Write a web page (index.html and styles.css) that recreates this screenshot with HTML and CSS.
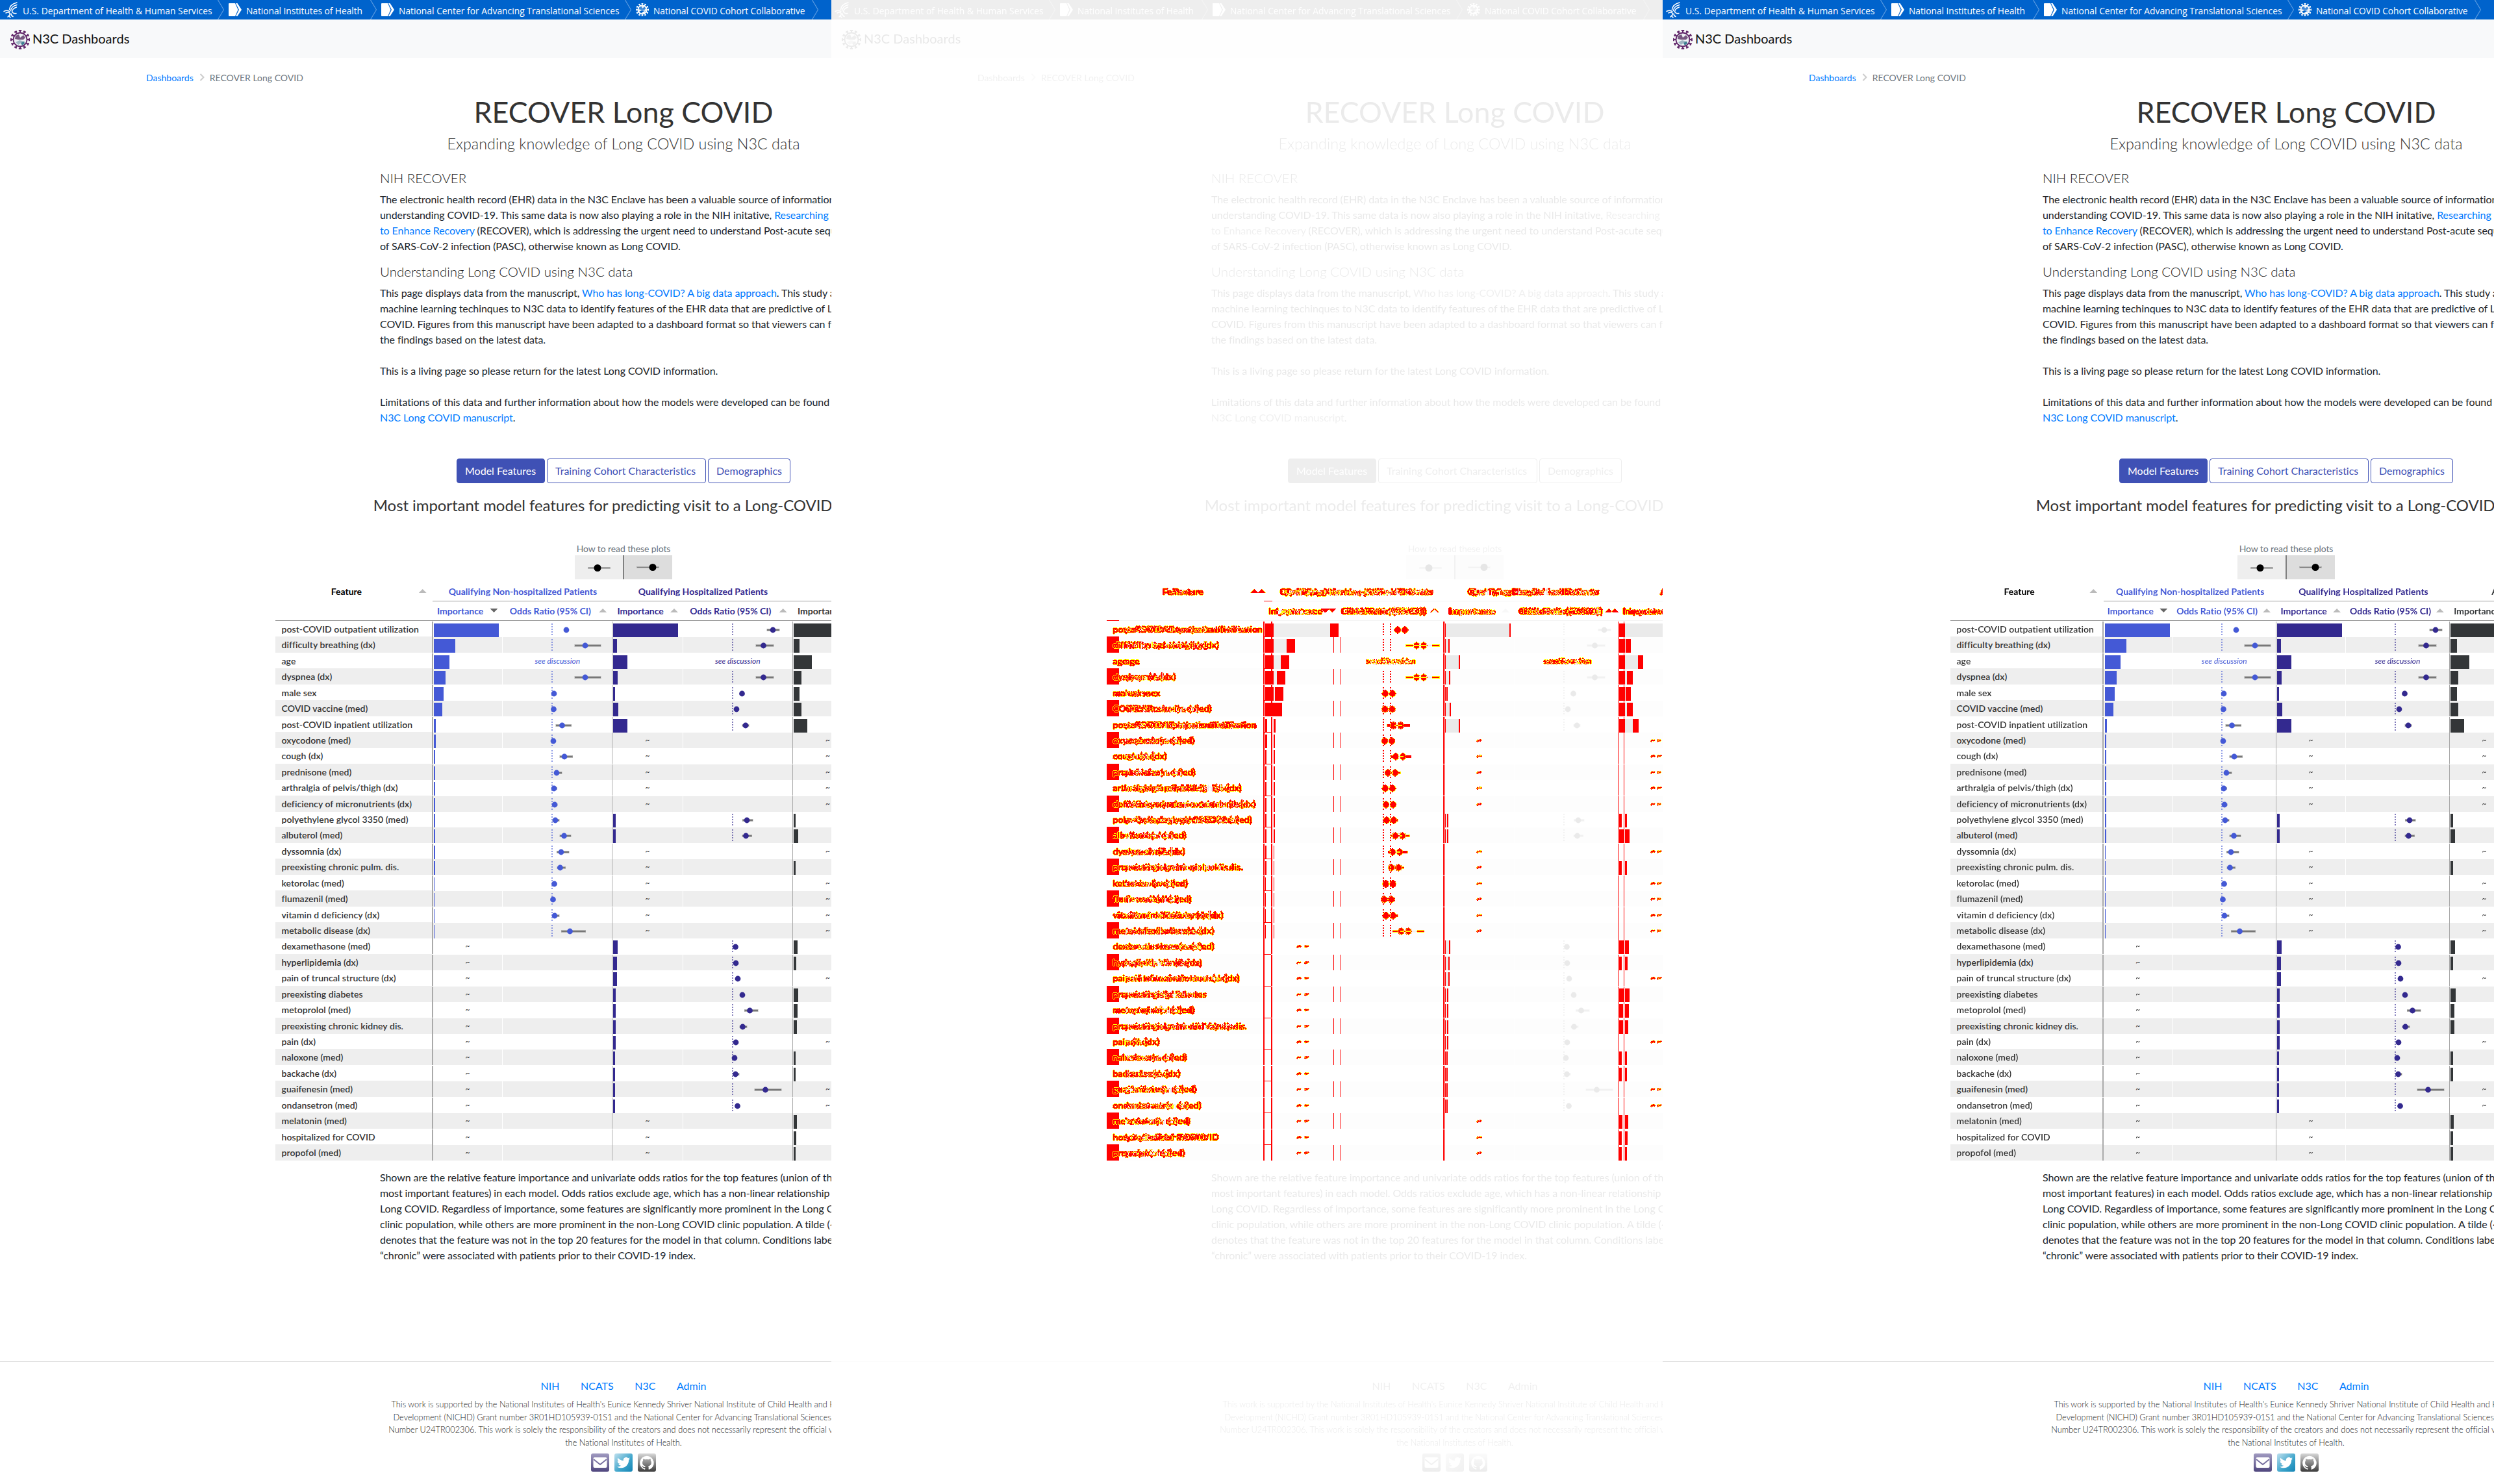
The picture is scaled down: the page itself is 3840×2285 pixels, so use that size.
FILE: index.html
```html
<!DOCTYPE html>
<html lang="en">
<head>
<meta charset="utf-8">
<title>RECOVER Long COVID | N3C Dashboards</title>
<link rel="stylesheet" href="styles.css">
</head>
<body>
<svg class="defs" width="0" height="0" aria-hidden="true">
  <defs>
    <filter id="mark" x="0" y="0" width="1" height="1" color-interpolation-filters="sRGB">
      <feColorMatrix values=".4 .4 .2 0 0  .4 .4 .2 0 0  0 0 0 0 0  0 0 0 0 1"/>
      <feComponentTransfer>
        <feFuncR type="discrete" tableValues="0 1 1 1 1 1 1 1 1 1 1 1 1 1 1 1 1 1 1 1"/>
        <feFuncG type="discrete" tableValues="0 0 1 1 1 0 0 0 0 0 0 0 0 0 0 0 0 0 0 0"/>
      </feComponentTransfer>
      <feColorMatrix values="1 0 0 0 0  0 1 0 0 0  0 0 0 0 0  1 0 0 0 0"/>
    </filter>
    <linearGradient id="g-mail" x1="0" y1="0" x2="0" y2="1"><stop offset="0" stop-color="#a09ac0"/><stop offset="1" stop-color="#4f467e"/></linearGradient>
    <linearGradient id="g-bird" x1="0" y1="0" x2="1" y2="1"><stop offset="0" stop-color="#bfe0ee"/><stop offset=".6" stop-color="#3ba3ca"/><stop offset="1" stop-color="#1585b5"/></linearGradient>
    <linearGradient id="g-cat" x1="0" y1="0" x2="0" y2="1"><stop offset="0" stop-color="#d8d8d8"/><stop offset="1" stop-color="#3c3c3c"/></linearGradient>
    <symbol id="i-hhs" viewBox="0 0 22 25">
      <g fill="none" stroke="#fff" stroke-width="1.5" stroke-linecap="round">
        <path d="M21 1C13 3 10 7 9.500 12"/><path d="M21 4.500C15 6 12 9 11.500 13.500"/><path d="M20.500 8C16 9.500 14 11.500 13.500 15"/>
        <path d="M1 14.500C5 12.500 8 13 10 15"/><path d="M4 17C8 15 11 16.500 10 20L7 23"/><path d="M13.500 15C15 18 17 18 20 17.500"/><path d="M12 18C12 21 13.500 22 15 22.500"/><path d="M8.500 21.500L11 24"/>
      </g>
    </symbol>
    <symbol id="i-nih" viewBox="0 0 20 20"><path d="M1 0H10L14.500 10L10 20H1Q0 20 0 19V1Q0 0 1 0Z" fill="#fff"/><path d="M11 0H13.500L20 10L13.500 20H11L16 10Z" fill="#fff"/></symbol>
    <symbol id="i-virus" viewBox="0 0 30 30">
      <circle class="ring" cx="15" cy="15" r="10.500"/>
      <path class="spikes" d="M15 5V0M15 30V25M5 15H0M30 15H25M20 6.300L22.500 2M10 23.700L7.500 28M10 6.300L7.500 2M20 23.700L22.500 28M6.300 10L2 7.500M23.700 20L28 22.500M6.300 20L2 22.500M23.700 10L28 7.500"/>
      <path class="knobs" d="M12.800 1H17.200M12.800 29H17.200M1 12.800V17.200M29 12.800V17.200M20.200 1.800L23.800 3.800M6.200 26.200L9.800 28.200M9.800 1.800L6.200 3.800M20.200 28.200L23.800 26.200M1.800 9.800L3.800 6.200M26.200 23.800L28.200 20.200M1.800 20.200L3.800 23.800M26.200 6.200L28.200 9.800"/>
      <path class="land-a" d="M8 9L13 7L15 12L20 8L23 12L20 15L12 15L7 14Z"/><path class="land-b" d="M8 19L14 16L22 18L21 22L17 20L12 23Z"/><path class="land-c" d="M16 20L21 18L22 21L18 24Z"/>
    </symbol>
    <symbol id="i-chev" viewBox="0 0 10 30"><path d="M.5 0L9.500 15L.5 30" fill="none" stroke="#5c9ce0" stroke-width="1.200"/></symbol>
  </defs>
</svg>

<main class="compare" id="compare"></main>

<template id="page">
<section class="panel"><div class="page">
  <header class="gov">
    <svg class="hhs"><use href="#i-hhs"/></svg><span class="t-hhs">U.S. Department of Health &amp; Human Services</span><svg class="chev"><use href="#i-chev"/></svg>
    <svg class="nih"><use href="#i-nih"/></svg><span class="t-nih">National Institutes of Health</span><svg class="chev"><use href="#i-chev"/></svg>
    <svg class="nih"><use href="#i-nih"/></svg><span class="t-ncats">National Center for Advancing Translational Sciences</span><svg class="chev"><use href="#i-chev"/></svg>
    <svg class="virus white"><use href="#i-virus"/></svg><span class="t-n3c">National COVID Cohort Collaborative</span><svg class="chev"><use href="#i-chev"/></svg>
  </header>
  <nav class="brand"><svg class="virus"><use href="#i-virus"/></svg><span>N3C Dashboards</span></nav>
  <div class="crumbs"><a>Dashboards</a><svg viewBox="0 0 8 12"><path d="M1.500 1L6.500 6L1.500 11" fill="none" stroke="#ccc" stroke-width="2"/></svg><span>RECOVER Long COVID</span></div>
  <h1>RECOVER Long COVID</h1>
  <p class="subtitle">Expanding knowledge of Long COVID using N3C data</p>
  <article class="copy">
    <h2>NIH RECOVER</h2>
    <p class="b1">The electronic health record (EHR) data in the N3C Enclave has been a valuable source of information for<br>understanding COVID-19. This same data is now also playing a role in the NIH initative, <a>Researching COVID</a><br><a>to Enhance Recovery</a> (RECOVER), which is addressing the urgent need to understand Post-acute sequelae<br>of SARS-CoV-2 infection (PASC), otherwise known as Long COVID.</p>
    <h2>Understanding Long COVID using N3C data</h2>
    <p>This page displays data from the manuscript, <a>Who has long-COVID? A big data approach</a>. This study applies<br>machine learning techinques to N3C data to identify features of the EHR data that are predictive of Long<br>COVID. Figures from this manuscript have been adapted to a dashboard format so that viewers can follow<br>the findings based on the latest data.<br><br>This is a living page so please return for the latest Long COVID information.<br><br>Limitations of this data and further information about how the models were developed can be found in the<br><a>N3C Long COVID manuscript</a>.</p>
  </article>
  <div class="tabs"><b class="on">Model Features</b><b>Training Cohort Characteristics</b><b>Demographics</b></div>
  <h3>Most important model features for predicting visit to a Long-COVID Clinic</h3>
  <figure class="legend"><figcaption>How to read these plots</figcaption>
    <svg width="150" height="37"><path fill="#eee" d="M0 0H74V37H0z"/><path fill="#ddd" d="M76 0H150V37H76z"/><path fill="#808080" d="M74 0H76V37H74z"/><path stroke="#b5b5b5" stroke-width="3" d="M20 19.500H55M95 18.500H130"/><path stroke="#777" d="M21 19.500H54M96 18.500H129"/><circle cx="35" cy="19.500" r="5.500"/><circle cx="120" cy="18.500" r="5.500"/></svg>
  </figure>
  <div class="stage"></div>
  <article class="copy notes"><p>Shown are the relative feature importance and univariate odds ratios for the top features (union of the 20<br>most important features) in each model. Odds ratios exclude age, which has a non-linear relationship with<br>Long COVID. Regardless of importance, some features are significantly more prominent in the Long COVID<br>clinic population, while others are more prominent in the non-Long COVID clinic population. A tilde (~)<br>denotes that the feature was not in the top 20 features for the model in that column. Conditions labeled<br>“chronic” were associated with patients prior to their COVID-19 index.</p></article>
  <footer class="foot">
    <div class="links"><a>NIH</a><a>NCATS</a><a>N3C</a><a>Admin</a></div>
    <p>This work is supported by the National Institutes of Health's Eunice Kennedy Shriver National Institute of Child Health and Human<br>Development (NICHD) Grant number 3R01HD105939-01S1 and the National Center for Advancing Translational Sciences Grant<br>Number U24TR002306. This work is solely the responsibility of the creators and does not necessarily represent the official views of<br>the National Institutes of Health.</p>
    <div class="social">
      <svg viewBox="0 0 28 28"><rect width="28" height="28" rx="3" fill="url(#g-mail)"/><rect x="3.500" y="6" width="21" height="16" rx="2" fill="#fff"/><path d="M4 9L14 17L24 9" fill="none" stroke="#746c9e" stroke-width="1.800"/></svg>
      <svg viewBox="0 0 28 28"><rect width="28" height="28" rx="3" fill="url(#g-bird)"/><g transform="translate(4 4) scale(.84)"><path fill="#fff" d="M23.950 4.570a10 10 0 0 1-2.820.77 4.960 4.960 0 0 0 2.160-2.720c-.95.550-2 .95-3.130 1.180a4.920 4.920 0 0 0-8.380 4.480C7.690 8.090 4.070 6.130 1.640 3.160a4.820 4.820 0 0 0-.66 2.480c0 1.710.87 3.210 2.190 4.100a4.900 4.900 0 0 1-2.230-.62v.06a4.920 4.920 0 0 0 3.950 4.830 5 5 0 0 1-2.210.08 4.940 4.940 0 0 0 4.600 3.420A9.870 9.870 0 0 1 0 19.540a14 14 0 0 0 7.550 2.210c9.050 0 14-7.500 14-13.980 0-.21 0-.42-.02-.63a9.940 9.940 0 0 0 2.420-2.570z"/></g></svg>
      <svg viewBox="0 0 28 28"><rect width="28" height="28" rx="3" fill="url(#g-cat)"/><g transform="translate(3.200 3.500) scale(.9)"><path fill="#fff" d="M12 .3a12 12 0 0 0-3.800 23.380c.6.120.83-.26.83-.57L9 21.070c-3.340.72-4.040-1.610-4.040-1.610-.55-1.390-1.340-1.760-1.340-1.760-1.080-.74.090-.73.090-.73 1.200.09 1.830 1.240 1.830 1.240 1.080 1.830 2.810 1.300 3.500 1 .1-.78.420-1.310.760-1.610-2.670-.3-5.470-1.330-5.470-5.930 0-1.310.470-2.380 1.240-3.220-.14-.3-.54-1.520.1-3.180 0 0 1-.32 3.300 1.230a11.500 11.500 0 0 1 6 0c2.280-1.550 3.290-1.230 3.290-1.230.640 1.660.240 2.880.120 3.180a4.650 4.650 0 0 1 1.230 3.220c0 4.610-2.810 5.630-5.480 5.920.420.360.810 1.100.810 2.220l-.01 3.290c0 .310.200.690.820.570A12 12 0 0 0 12 .3"/></g></svg>
    </div>
  </footer>
</div></section>
</template>
<script src="script.js"></script>
</body>
</html>
```
FILE: script.js
```js
// [label, importance x3 (null = not in the top 20), odds x2 as [centre, low, high] in px from 1.0]
const S = 'see discussion';
const rows = [
  ['post-COVID outpatient utilization', 100, 100, 100, [22, 20, 25], [62, 53, 72]],
  ['difficulty breathing (dx)', 33.5, 5.5, 9.5, [51, 35, 75], [47.5, 36, 63]],
  ['age', 24, 21.5, 28.5, S, S],
  ['dyspnea (dx)', 18.5, 7, 12, [51, 35, 75], [47.5, 36, 63]],
  ['male sex', 15, 2.5, 9.5, [3, 1, 6], [14.5, 12, 17]],
  ['COVID vaccine (med)', 13, 7.5, 12, [2.5, 1, 5], [6, 4, 8]],
  ['post-COVID inpatient utilization', 3, 21.5, 21, [15.5, 6, 29.5], [20, 15, 25]],
  ['oxycodone (med)', 2.8, null, null, [2, 0, 4]],
  ['cough (dx)', 2.5, null, null, [19, 12, 31.5]],
  ['prednisone (med)', 2.3, null, null, [7, 4, 15]],
  ['arthralgia of pelvis/thigh (dx)', 2, null, null, [3, 1, 7.5]],
  ['deficiency of micronutrients (dx)', 2, null, null, [4, 1, 8]],
  ['polyethylene glycol 3350 (med)', 2, 3.5, 3.5, [5, 1, 11], [22, 15.5, 31]],
  ['albuterol (med)', 2, 4, 7, [18.5, 12, 29], [20.5, 15, 29.5]],
  ['dyssomnia (dx)', 1.8, null, null, [14, 7.5, 26]],
  ['preexisting chronic pulm. dis.', 1.8, null, 3.5, [12.5, 8, 20.5]],
  ['ketorolac (med)', 1.4, null, null, [3.5, 0, 7]],
  ['flumazenil (med)', 1.4, null, null, [1.5, 0, 4]],
  ['vitamin d deficiency (dx)', 1, null, null, [4, 0.5, 11]],
  ['metabolic disease (dx)', 1, null, null, [27.5, 14.5, 51.5]],
  ['dexamethasone (med)', null, 6.5, 6.5, null, [4.5, 3, 6]],
  ['hyperlipidemia (dx)', null, 5.5, 4, null, [5, 3, 7]],
  ['pain of truncal structure (dx)', null, 5.5, null, null, [8, 6, 11]],
  ['preexisting diabetes', null, 4, 7.5, null, [15, 12, 18]],
  ['metoprolol (med)', null, 4, 6, null, [26.5, 18.5, 39]],
  ['preexisting chronic kidney dis.', null, 4, 5.5, null, [15.5, 11, 22]],
  ['pain (dx)', null, 4, null, null, [5, 3, 8]],
  ['naloxone (med)', null, 3, 3.5, null, [3, 1, 5]],
  ['backache (dx)', null, 3, 3.5, null, [4.5, 1, 10]],
  ['guaifenesin (med)', null, 3, null, null, [50.5, 34, 75]],
  ['ondansetron (med)', null, 3, null, null, [7.5, 5, 11]],
  ['melatonin (med)', null, null, 5],
  ['hospitalized for COVID', null, null, 4],
  ['propofol (med)', null, null, 3.5],
];

const imp = (v, g) => v == null
  ? `<div class="imp g${g} none">~</div>`
  : `<div class="imp g${g}"><i class="bar" style="width:${v}px"></i></div>`;

const odds = (o, g) => {
  if (!o) return `<div class="odds g${g}"></div>`;
  if (o === S) return `<div class="odds g${g} talk">${S}</div>`;
  const [c, a, b] = o;
  return `<div class="odds g${g}"><svg width="155" height="21"><path class="unity" d="M76 1V20"/>` +
    `<path stroke="#b5b5b5" stroke-width="4" d="M${75.5 + a} 11H${76.5 + b}"/><path stroke="#777" stroke-width="2" d="M${76 + a} 11H${76 + b}"/>` +
    `<circle cx="${76 + c}" cy="11" r="4.400"/></svg></div>`;
};

const table = size => `<div class="features ${size}">
  <div class="head"><div class="h-label">Feature<i class="up"></i></div>
  ${['Qualifying Non-hospitalized Patients', 'Qualifying Hospitalized Patients', 'All Qualifying Patients'].map((t, i) =>
    `<div class="h-group g${i}"><div class="h-title">${t}</div><div class="h-cols"><div class="h-imp">Importance<i class="${i ? 'up' : 'down'}"></i></div><div class="h-odds">Odds Ratio (95% CI)<i class="up"></i></div></div></div>`).join('')}
  </div>
  ${rows.map(r => `<div class="row"><div class="label">${r[0]}</div>${[0, 1, 2].map(g => imp(r[1 + g], g) + odds(g < 2 ? r[4 + g] : null, g)).join('')}</div>`).join('')}
</div>`;

const host = document.getElementById('compare');
for (const kind of ['before', 'changes', 'after']) {
  const node = document.getElementById('page').content.cloneNode(true);
  node.querySelector('.panel').classList.add(kind);
  node.querySelector('.stage').innerHTML = kind === 'after' ? table('narrow')
    : kind === 'before' ? table('wide')
    : table('wide') + `<div class="overlay">${table('wide')}${table('narrow')}</div>`;
  host.append(node);
}
```
FILE: styles.css
```css
* { box-sizing: border-box; }
body { margin: 0; background: #fff; color: #212529; font: 16px/24px Lato, "Open Sans", sans-serif; font-variant-ligatures: none; }
.defs { position: absolute; }
a { color: #007bff; }
h1, h2, h3, p, figure { margin: 0; }

.compare { display: grid; grid-template-columns: repeat(3, 1280px); height: 2285px; overflow: hidden; }
.panel { width: 1280px; height: 2285px; overflow: hidden; background: #fff; }
.page { width: 1920px; display: flex; flex-direction: column; }

.gov { display: flex; align-items: center; height: 30px; background: #0063cc; color: #fff; font: 500 13.8px/30px "Open Sans", sans-serif; padding: 0 0 0 5px; }
.gov span { white-space: nowrap; padding-top: 4px; }
.hhs { width: 22px; height: 25px; margin-right: 8px; }
.nih { width: 20px; height: 20px; margin-right: 7px; }
.chev { width: 10px; height: 30px; margin: 0 7px 0 8px; }
.t-hhs { width: 292px; letter-spacing: .04px; }
.t-nih { width: 183px; letter-spacing: -.05px; }
.t-ncats { width: 340px; letter-spacing: .02px; }
.t-n3c { width: 236px; letter-spacing: -.06px; }
.virus { width: 30px; height: 30px; --ring: #62286b; --a: #4e2258; --b: #9fb6c3; --c: #3e7f92; }
.white { width: 20px; height: 20px; margin-right: 7px; --ring: #fff; --a: #0063cc; --b: #0063cc; --c: #fff; }
.ring { fill: #eef2f5; stroke: var(--ring); stroke-width: 1.8; }
.spikes { fill: none; stroke: var(--ring); stroke-width: 2.2; }
.knobs { fill: none; stroke: var(--ring); stroke-width: 2; }
.land-a { fill: var(--a); opacity: .75; }
.land-b { fill: var(--b); }
.land-c { fill: var(--c); }

.brand { display: flex; align-items: center; gap: 4px; height: 59px; padding: 3px 16px 0; background: #f8f9fa; font-size: 20px; color: #111; }
.brand span { padding-bottom: 4px; }
.crumbs { display: flex; align-items: center; height: 24px; margin: 19px 0 0 225px; font-size: 14px; color: #6c757d; }
.crumbs svg { width: 8px; height: 12px; margin: 0 8px 2px 9px; }
h1 { margin-top: 12px; height: 56px; text-align: center; font: 400 44.8px/56px Lato, sans-serif; color: #333; }
.subtitle { margin-top: 7px; height: 28px; text-align: center; font: 300 23.4px/28px Lato, sans-serif; color: #333; }

.copy { width: 750px; margin: 25px 0 0 585px; white-space: nowrap; letter-spacing: -.08px; }
.copy h2 { height: 35px; font: 300 20.5px/28px Lato, sans-serif; letter-spacing: 0; color: #222; }
.copy .b1 { margin-bottom: 13px; }
.tabs { display: flex; gap: 3px; margin: 51px 0 0 703px; height: 38px; }
.tabs b { font-weight: 400; line-height: 36px; padding: 0 12px; border: 1px solid #3f51b5; border-radius: 4px; color: #3f51b5; background: #fff; white-space: nowrap; }
.tabs b:nth-child(1) { width: 136px; }
.tabs b:nth-child(2) { width: 245px; }
.tabs b:nth-child(3) { width: 127px; }
.tabs .on { background: #3f51b5; color: #fff; }
h3 { margin-top: 19px; height: 30px; text-align: center; font: 400 24px/30px Lato, sans-serif; color: #333; letter-spacing: -.07px; }
.legend { margin-top: 42px; height: 61px; display: flex; flex-direction: column; align-items: center; font-size: 14px; line-height: 20px; color: #6c757d; letter-spacing: -.1px; }
.legend svg { flex: none; }

/* Feature table */
.stage { position: relative; width: 1920px; height: 892px; }
.features { --label: 240.7px; --imp: 109.8px; --odds: 167.7px; margin-left: 424px; width: 1073.2px; font-size: 14px; color: #333; }
.features.narrow { --label: 234.3px; --imp: 108px; --odds: 158.8px; margin-left: 443px; width: 1034.7px; }
.head { display: grid; grid-template-columns: var(--label) repeat(3, calc(var(--imp) + var(--odds))); height: 60px; border-bottom: 1px solid #999; font-weight: 700; color: #000; text-align: center; line-height: 29px; }
.h-label, .h-imp, .h-odds { position: relative; padding-right: 22px; white-space: nowrap; }
.h-title { height: 30px; border-bottom: 1px solid #999; }
.h-group { margin-left: 1.5px; margin-right: -1.5px; }
.h-cols { display: grid; grid-template-columns: var(--imp) var(--odds); }
.h-imp, .h-odds { margin-left: -1.5px; margin-right: 1.5px; }
.head .g0, .talk.g0 { color: #4459d6; }
.head .g1, .talk.g1 { color: #33298f; }
.head .g2 { color: #333638; }
.up, .down { position: absolute; right: 8px; top: 11px; width: 12px; height: 6px; background: #bbb; clip-path: polygon(50% 0, 100% 100%, 0 100%); }
.down { background: #666; clip-path: polygon(0 0, 100% 0, 50% 100%); }
.row { display: grid; grid-template-columns: var(--label) repeat(3, var(--imp) var(--odds)); height: 24.43px; }
.row:nth-child(odd) > div { background-color: #eee; }
.label { padding-left: 9.5px; font-weight: 600; line-height: 25px; letter-spacing: .06px; white-space: nowrap; }
.imp { border-left: 1px solid #aaa; padding: 3px 0 0 1.3px; margin-top: 1px; border-right: 1px solid #fff; display: flex; }
.imp.g0 { border-left-width: 2px; }
.imp.none { justify-content: center; align-items: center; padding: 0; font-size: 12px; line-height: 20px; }
.bar { height: 100%; display: block; }
.g0 .bar { background: #4459d6; }
.g1 .bar { background: #33298f; }
.g2 .bar { background: #333638; }
.odds { margin-top: 1px; padding-top: 2px; overflow: hidden; }
.odds svg { display: block; }
.odds.g0 circle { fill: #4459d6; }
.odds.g1 circle { fill: #33298f; }
.unity { stroke: #4459d6; stroke-width: 2; stroke-dasharray: 2 2; opacity: .6; }
.g1 .unity { stroke: #33298f; }
.talk { text-align: center; font-style: italic; font-size: 12px; line-height: 20px; }

.notes { margin-top: 13px; }
.foot { margin-top: 151px; border-top: 1px solid #dfdfdf; display: flex; flex-direction: column; align-items: center; }
.links { display: flex; gap: 32.5px; margin-top: 25px; }
.foot p { margin-top: 7px; text-align: center; font-weight: 300; font-size: 12.8px; line-height: 19.5px; color: #222; white-space: nowrap; }
.social { display: flex; gap: 8px; margin-top: 6.5px; }
.social svg { width: 28px; height: 28px; }

/* Middle panel: unchanged parts fade out, changed pixels turn red and yellow */
.changes .page > :not(.stage), .changes .stage > .features { filter: grayscale(1) opacity(.1); }
.overlay { position: absolute; left: 0; top: 0; width: 1920px; height: 892px; display: grid; isolation: isolate; filter: url(#mark); text-shadow: 1px 0 #c8c8c8, -1px 0 #c8c8c8, 0 1px #c8c8c8, 0 -1px #c8c8c8; }
.overlay .features { grid-area: 1 / 1; margin: 0; padding-left: 424px; width: 1920px; height: 892px; background: #fff; }
.overlay .narrow { padding-left: 443px; mix-blend-mode: difference; }
.overlay .head { width: calc(var(--label) + 3 * (var(--imp) + var(--odds))); }
.overlay circle { stroke: #c8c8c8; stroke-width: 2; paint-order: stroke; }
```
